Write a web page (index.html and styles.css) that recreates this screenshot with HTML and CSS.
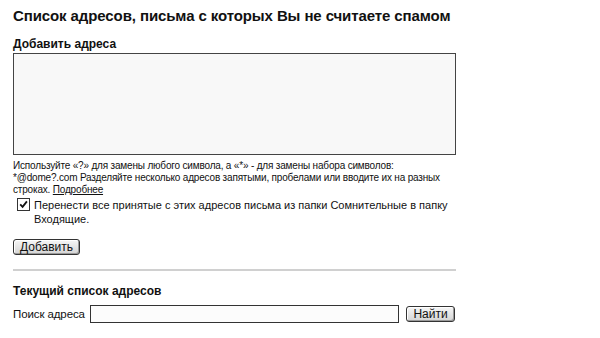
FILE: index.html
```html
<!DOCTYPE html>
<html lang="ru">
<head>
<meta charset="utf-8">
<link rel="stylesheet" href="styles.css">
</head>
<body>
<div class="page">
  <h1 class="title">Список адресов, письма с которых Вы не считаете спамом</h1>
  <h2 class="label">Добавить адреса</h2>
  <div class="textarea"></div>
  <p class="help">Используйте «?» для замены любого символа, а «*» - для замены набора символов:<br>*@dome?.com Разделяйте несколько адресов запятыми, пробелами или вводите их на разных<br>строках. <a class="link" href="#">Подробнее</a></p>
  <div class="check-row">
    <span class="checkbox"><svg width="9" height="9" viewBox="0 0 9 9"><path d="M1.2 4.3 L3.6 6.8 L7.9 1.4" fill="none" stroke="#111" stroke-width="1.8"/></svg></span>
    <span class="check-text">Перенести все принятые с этих адресов письма из папки Сомнительные в папку<br>Входящие.</span>
  </div>
  <div class="btn-row"><span class="btn btn-add">Добавить</span></div>
  <div class="sep"></div>
  <h2 class="label label2">Текущий список адресов</h2>
  <div class="search-row">
    <span class="search-label">Поиск адреса</span>
    <span class="input"></span>
    <span class="btn btn-find">Найти</span>
  </div>
</div>
</body>
</html>
```
FILE: styles.css
```css
html, body { margin: 0; padding: 0; background: #fff; }
body { font-family: "Liberation Sans", Arial, sans-serif; color: #111; }
.page { padding: 7px 0 0 13px; width: 443px; }
.title { margin: 0; font-size: 15px; font-weight: bold; line-height: 18px; letter-spacing: -0.1px; color: #111; white-space: nowrap; }
.label { margin: 12px 0 0; font-size: 12px; font-weight: bold; line-height: 14px; color: #111; white-space: nowrap; }
.textarea { margin-top: 2px; height: 100px; border: 1px solid #444; background: #f8f8f8; }
.help { margin: 5px 0 0; font-size: 10px; line-height: 12px; letter-spacing: -0.18px; color: #111; white-space: nowrap; }
.link { color: #111; text-decoration: underline; }
.check-row { display: flex; align-items: flex-start; margin-top: 2px; padding-left: 4px; }
.checkbox { width: 11px; height: 11px; border: 1px solid #333; background: #fff; display: flex; align-items: center; justify-content: center; flex: none; }
.check-text { margin-left: 4px; font-size: 11px; line-height: 14px; white-space: nowrap; }
.btn-row { margin-top: 13px; display: flex; }
.btn { display: inline-flex; align-items: center; justify-content: center; box-sizing: border-box; height: 16px; border: 1px solid #333; border-radius: 3px; background: linear-gradient(#f6f6f6, #d4d4d4); font-size: 12px; line-height: 14px; box-shadow: inset -1px -1px 0 #9a9a9a, inset 1px 1px 0 #fff; white-space: nowrap; }
.btn-add { width: 67px; }
.sep { margin-top: 14px; height: 2px; background: #d0d0d0; }
.label2 { margin-top: 13px; }
.search-row { display: flex; align-items: center; margin-top: 7px; }
.search-label { font-size: 11.5px; line-height: 14px; letter-spacing: -0.1px; white-space: nowrap; flex: none; width: 70px; }
.input { margin-left: 7px; width: 307px; height: 16px; border: 1px solid #333; background: #fcfcfc; flex: none; }
.btn-find { margin-left: 7px; width: 49px; flex: none; }
```
